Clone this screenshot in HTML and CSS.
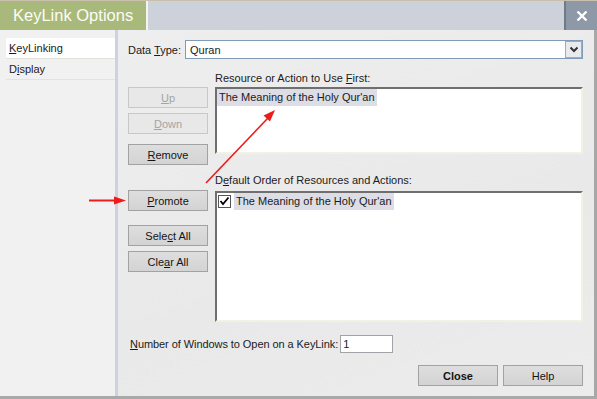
FILE: index.html
```html
<!doctype html>
<html lang="en">
<head>
    <meta charset="UTF-8">
    <title>KeyLink Options</title>
    <link rel="stylesheet" href="styles.css">
</head>
<body>
    <div class="window">
        <div class="titlebar">
            <div class="titlebar__tab">KeyLink Options</div>
            <div class="titlebar__close">
                <svg width="12" height="12" viewBox="0 0 12 12">
                    <path d="M1.5 1.5 L10.5 10.5 M10.5 1.5 L1.5 10.5" stroke="#fff" stroke-width="2.4" fill="none"/>
                </svg>
            </div>
        </div>
        <div class="main">
            <ul class="sidebar">
                <li class="sidebar__item sidebar__item--active"><u>K</u>eyLinking</li>
                <li class="sidebar__item">D<u>i</u>splay</li>
            </ul>
            <div class="divider"></div>
            <div class="content">
                <div class="type-row">
                    <span>Data <u>T</u>ype:</span>
                    <div class="select">
                        <span class="select__value">Quran</span>
                        <span class="select__btn">
                            <svg width="10" height="7" viewBox="0 0 10 7">
                                <path d="M1.5 1.5 L5 5 L8.5 1.5" stroke="#333" stroke-width="2" fill="none"/>
                            </svg>
                        </span>
                    </div>
                </div>
                <div class="panes">
                    <div class="side-buttons">
                        <button class="btn btn--up" disabled><u>U</u>p</button>
                        <button class="btn btn--down" disabled><u>D</u>own</button>
                        <button class="btn btn--remove"><u>R</u>emove</button>
                        <button class="btn btn--promote"><u>P</u>romote</button>
                        <button class="btn btn--select">Sele<u>c</u>t All</button>
                        <button class="btn btn--clear">Cle<u>a</u>r All</button>
                    </div>
                    <div class="lists">
                        <div class="lists__label lists__label--first">Resource or Action to Use <u>F</u>irst:</div>
                        <div class="listbox listbox--first">
                            <span class="listbox__item">The Meaning of the Holy Qur'an</span>
                        </div>
                        <div class="lists__label lists__label--order">D<u>e</u>fault Order of Resources and Actions:</div>
                        <div class="listbox listbox--order">
                            <div class="check-row">
                                <span class="checkbox">
                                    <svg width="11" height="11" viewBox="0 0 11 11">
                                        <path d="M1.5 5 L4 8 L9.5 1.5" stroke="#000" stroke-width="1.8" fill="none"/>
                                    </svg>
                                </span>
                                <span class="listbox__item">The Meaning of the Holy Qur'an</span>
                            </div>
                        </div>
                    </div>
                </div>
                <div class="count-row">
                    <span><u>N</u>umber of Windows to Open on a KeyLink:</span>
                    <div class="count-input">1</div>
                </div>
                <div class="footer">
                    <button class="btn btn--bold">Close</button>
                    <button class="btn">Help</button>
                </div>
            </div>
        </div>
        <svg class="arrows" width="597" height="399" viewBox="0 0 597 399">
            <line x1="206" y1="183" x2="268" y2="118" stroke="#ec1c1c" stroke-width="1.6"/>
            <polygon points="275,110 270,121.5 263.5,115.5" fill="#ec1c1c"/>
            <line x1="89" y1="200.5" x2="116" y2="200.5" stroke="#ec1c1c" stroke-width="2"/>
            <polygon points="126,200.5 114,196.5 114,204.5" fill="#ec1c1c"/>
        </svg>
    </div>
</body>
</html>
```

FILE: styles.css
```css
*, ::before, ::after {
    padding: 0;
    margin: 0;
    box-sizing: border-box;
}
body {
    font-family: 'Liberation Sans', Arial, sans-serif;
    font-size: 11px;
    color: #1b1b1b;
    width: 597px;
    height: 399px;
    overflow: hidden;
}
.window {
    position: relative;
    display: flex;
    flex-direction: column;
    height: 399px;
}
.titlebar {
    display: flex;
    height: 30px;
    border-top: 1px solid #c9c1ad;
    background: #cdd1da;
}
.titlebar__tab {
    width: 148px;
    padding-left: 13px;
    background: #a9b97b;
    border-right: 2px solid #f4f4f0;
    color: #fbfcf6;
    font-size: 16.5px;
    line-height: 28px;
}
.titlebar__close {
    margin-left: auto;
    width: 33px;
    display: flex;
    align-items: center;
    justify-content: center;
    background: #8d99a7;
    border-left: 2px solid #6f7b89;
}
.main {
    flex: 1;
    display: flex;
    border-bottom: 3px solid #a9a9a9;
}
.sidebar {
    width: 115px;
    list-style: none;
    padding-top: 8px;
    background: #f1f1f1;
}
.sidebar__item {
    margin-left: 6px;
    padding-left: 3px;
    height: 21px;
    line-height: 20px;
    border-bottom: 1px solid #e3e3db;
}
.sidebar__item--active {
    background: #ffffff;
}
.divider {
    width: 3px;
    background: #cfd2de;
}
.content {
    flex: 1;
    display: flex;
    flex-direction: column;
    padding: 10px 11px 0 10px;
    background: linear-gradient(160deg, #eeeeee, #e9e9e9 60%, #ececec);
    border-right: 3px solid #a7a7a7;
}
.type-row {
    display: flex;
    align-items: center;
    gap: 4px;
}
.select {
    flex: 1;
    height: 19px;
    display: flex;
    align-items: center;
    background: #ffffff;
    border: 1px solid #7f9bb6;
    padding-left: 4px;
}
.select__value {
    flex: 1;
}
.select__btn {
    width: 17px;
    height: 17px;
    display: flex;
    align-items: center;
    justify-content: center;
    background: #e9eaee;
    border: 1px solid #a3abb6;
}
.panes {
    display: flex;
    gap: 7px;
}
.side-buttons {
    width: 80px;
    display: flex;
    flex-direction: column;
}
.btn {
    width: 80px;
    height: 21px;
    font-family: inherit;
    font-size: 11px;
    color: #141414;
    background: linear-gradient(#dedede, #d3d3d3);
    border: 1px solid #a2a2a2;
}
.btn:disabled {
    color: #a4a4a4;
    background: #e8e8e8;
    border-color: #c8c8c8;
}
.btn--bold {
    font-weight: bold;
}
.btn--up {
    margin-top: 28px;
}
.btn--down {
    margin-top: 5px;
}
.btn--remove {
    margin-top: 10px;
}
.btn--promote {
    margin-top: 25px;
}
.btn--select {
    margin-top: 14px;
}
.btn--clear {
    margin-top: 5px;
}
.lists {
    flex: 1;
}
.lists__label {
    line-height: 16px;
}
.lists__label--first {
    padding-top: 11px;
    margin-bottom: 1px;
}
.lists__label--order {
    padding-top: 18px;
    margin-bottom: 3px;
}
.listbox {
    background: #ffffff;
    border: 2px solid;
    border-color: #6f6f6f #f2f2e4 #f2f2e4 #6f6f6f;
}
.listbox--first {
    height: 67px;
}
.listbox--order {
    height: 131px;
}
.listbox__item {
    display: inline-block;
    padding: 0 2px;
    line-height: 17px;
    background: #dddde5;
}
.check-row {
    display: flex;
    align-items: center;
    gap: 3px;
    padding-left: 1px;
}
.checkbox {
    width: 13px;
    height: 13px;
    display: flex;
    align-items: center;
    justify-content: center;
    border: 1px solid #555555;
    background: #ffffff;
}
.count-row {
    display: flex;
    align-items: center;
    gap: 2px;
    margin-top: 13px;
    padding-left: 2px;
    letter-spacing: -0.07px;
}
.count-input {
    width: 53px;
    height: 18px;
    line-height: 16px;
    padding-left: 2px;
    background: #ffffff;
    border: 1px solid #a0a4a8;
}
.footer {
    display: flex;
    justify-content: flex-end;
    gap: 5px;
    margin-top: 12px;
}
.arrows {
    position: absolute;
    top: 0;
    left: 0;
    pointer-events: none;
}
```
